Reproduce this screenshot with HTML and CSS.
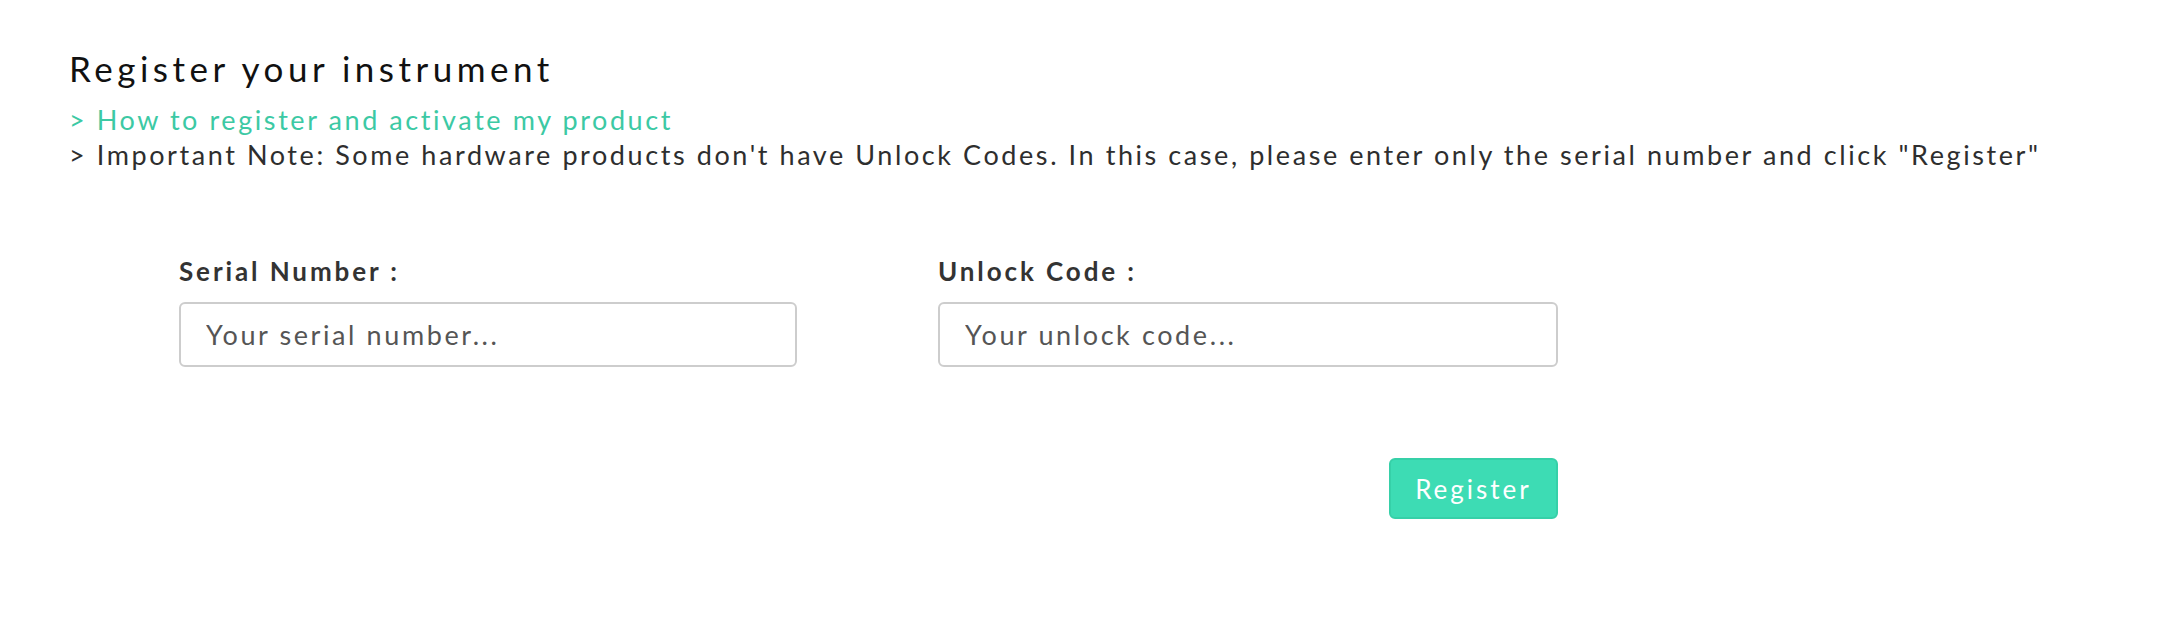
FILE: index.html
```html
<!DOCTYPE html>
<html lang="en">
<head>
<meta charset="utf-8">
<title>Register your instrument</title>
<link rel="stylesheet" href="styles.css">
</head>
<body>
<main class="page">
  <h1 class="title">Register your instrument</h1>
  <div class="notes">
    <p class="note note-link"><a href="#">&gt; How to register and activate my product</a></p>
    <p class="note">&gt; Important Note: Some hardware products don't have Unlock Codes. In this case, please enter only the serial number and click "Register"</p>
  </div>
  <form class="form">
    <div class="fields">
      <div class="field">
        <label class="label" for="serial">Serial Number :</label>
        <input class="input" id="serial" type="text" placeholder="Your serial number...">
      </div>
      <div class="field">
        <label class="label" for="unlock">Unlock Code :</label>
        <input class="input" id="unlock" type="text" placeholder="Your unlock code...">
      </div>
    </div>
    <div class="actions">
      <button class="btn" type="button">Register</button>
    </div>
  </form>
</main>
</body>
</html>
```
FILE: styles.css
```css
html, body {
  margin: 0;
  padding: 0;
  background: #ffffff;
}
body {
  font-family: "Lato", "Liberation Sans", sans-serif;
  color: #2a2a2a;
}
.page {
  padding: 44px 69px 0 69px;
}
.title {
  margin: 0;
  font-size: 35px;
  line-height: 48px;
  font-weight: 400;
  letter-spacing: 4.5px;
  color: #111111;
}
.notes {
  margin-top: 10px;
}
.note {
  margin: 0;
  font-size: 27px;
  line-height: 35px;
  letter-spacing: 2.58px;
  color: #2e2e2e;
}
.note-link a {
  color: #3cc9a4;
  text-decoration: none;
}
.form {
  margin-top: 84px;
  padding-left: 110px;
}
.fields {
  display: grid;
  grid-template-columns: 618px 620px;
  column-gap: 141px;
}
.field {
  display: flex;
  flex-direction: column;
}
.label {
  font-size: 26px;
  line-height: 30px;
  font-weight: 700;
  letter-spacing: 2.9px;
  color: #333333;
  margin-bottom: 16px;
}
.input {
  box-sizing: border-box;
  height: 65px;
  width: 100%;
  border: 2px solid #cdcdcd;
  border-radius: 6px;
  padding: 0 25px;
  font-family: "Lato", "Liberation Sans", sans-serif;
  font-size: 27px;
  letter-spacing: 2.6px;
  color: #333333;
  background: #ffffff;
  outline: none;
}
.input::placeholder {
  color: #555555;
}
.actions {
  width: 1379px;
  display: flex;
  justify-content: flex-end;
  margin-top: 91px;
}
.btn {
  box-sizing: border-box;
  width: 169px;
  height: 61px;
  border: 2px solid #36d0a8;
  border-radius: 6px;
  background: #3ddcb4;
  color: #ffffff;
  font-family: "Lato", "Liberation Sans", sans-serif;
  font-size: 26px;
  letter-spacing: 3px;
  cursor: pointer;
  padding: 0;
}
```
